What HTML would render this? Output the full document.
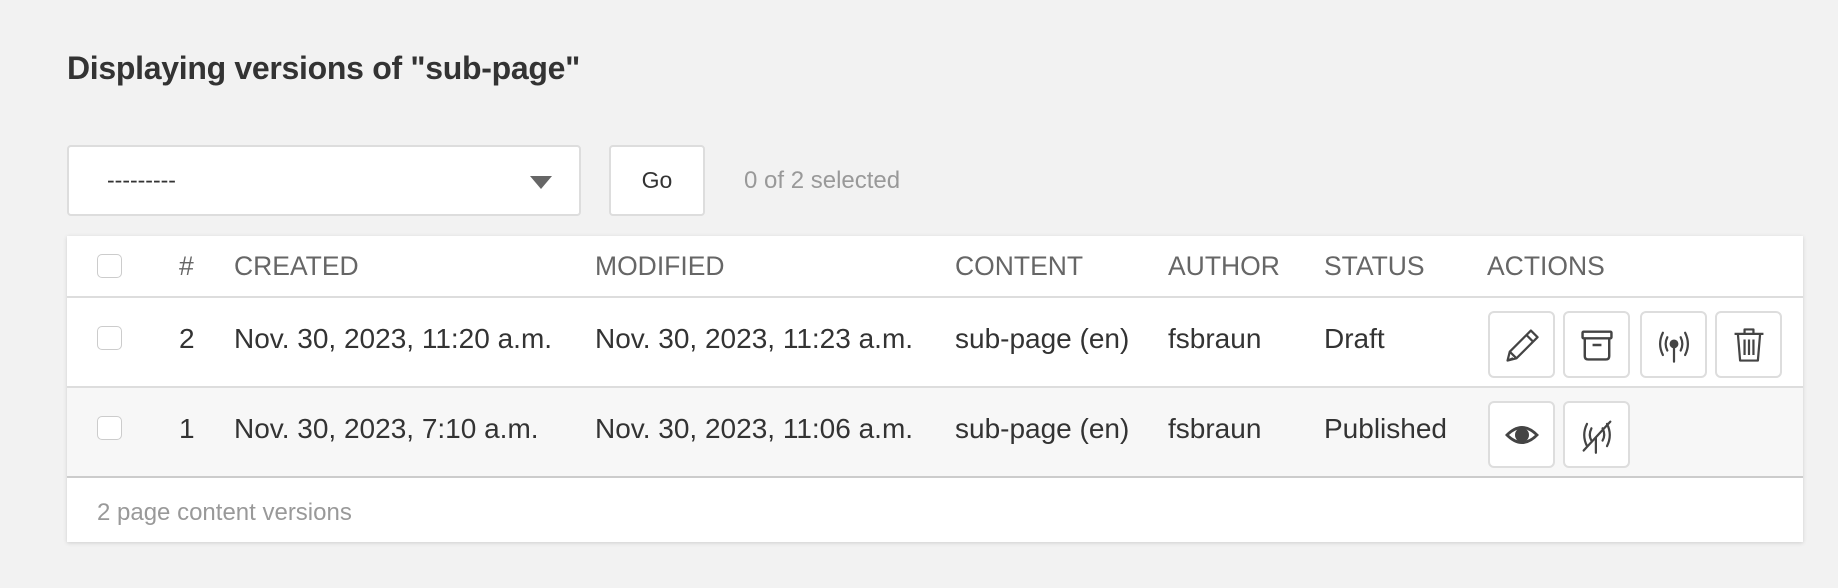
<!DOCTYPE html>
<html><head><meta charset="utf-8"><style>
*{box-sizing:border-box;margin:0;padding:0}
body{width:1838px;height:588px;background:#f2f2f2;font-family:"Liberation Sans",Helvetica,Arial,sans-serif;position:relative;overflow:hidden;color:#333}
.a{position:absolute;white-space:nowrap}
h1{position:absolute;left:67px;top:50px;font-size:32px;font-weight:bold;color:#333;letter-spacing:-0.3px}
.sel{position:absolute;left:67px;top:145px;width:514px;height:71px;background:#fff;border:2px solid #ddd;border-radius:4px}
.go{position:absolute;left:609px;top:145px;width:96px;height:71px;background:#fff;border:2px solid #ddd;border-radius:4px;font-size:23px;text-align:center;line-height:67px;color:#333}
.tbl{position:absolute;left:67px;top:236px;width:1736px;height:306px;background:#fff;box-shadow:0 1px 4px rgba(0,0,0,.15)}
.hl{position:absolute;left:0;width:1736px;height:2px;background:#ddd}
.cb{position:absolute;width:25px;height:24px;border:1.5px solid #ccc;border-radius:5px;background:#fff}
.h{font-size:26.5px;color:#666;top:251px}
.d{font-size:28px;color:#333}
.btn{position:absolute;width:67px;height:67px;border:2px solid #ddd;border-radius:6px;background:#fff;display:flex;align-items:center;justify-content:center}
</style></head><body>
<h1>Displaying versions of "sub-page"</h1>
<div class="sel"><span class="a" style="left:38px;top:20px;font-size:23px;color:#333">---------</span>
<svg class="a" style="left:461px;top:29px" width="22" height="13"><path d="M0 0H22L11 13Z" fill="#666"/></svg></div>
<div class="go">Go</div>
<span class="a" style="left:744px;top:167px;font-size:24px;color:#999">0 of 2 selected</span>
<div class="tbl">
<div class="a" style="left:0;top:151px;width:1736px;height:90px;background:#f7f7f7"></div>
<div class="hl" style="top:60px"></div>
<div class="hl" style="top:150px"></div>
<div class="hl" style="top:240px;background:#ccc"></div>
</div>
<div class="cb" style="left:97px;top:254px"></div>
<div class="cb" style="left:97px;top:326px"></div>
<div class="cb" style="left:97px;top:416px"></div>
<span class="a h" style="left:179px">#</span>
<span class="a h" style="left:234px">CREATED</span>
<span class="a h" style="left:595px">MODIFIED</span>
<span class="a h" style="left:955px">CONTENT</span>
<span class="a h" style="left:1168px">AUTHOR</span>
<span class="a h" style="left:1324px">STATUS</span>
<span class="a h" style="left:1487px">ACTIONS</span>
<span class="a d" style="left:179px;top:323px">2</span>
<span class="a d" style="left:234px;top:323px">Nov. 30, 2023, 11:20 a.m.</span>
<span class="a d" style="left:595px;top:323px">Nov. 30, 2023, 11:23 a.m.</span>
<span class="a d" style="left:955px;top:323px">sub-page (en)</span>
<span class="a d" style="left:1168px;top:323px">fsbraun</span>
<span class="a d" style="left:1324px;top:323px">Draft</span>
<span class="a d" style="left:179px;top:413px">1</span>
<span class="a d" style="left:234px;top:413px">Nov. 30, 2023, 7:10 a.m.</span>
<span class="a d" style="left:595px;top:413px">Nov. 30, 2023, 11:06 a.m.</span>
<span class="a d" style="left:955px;top:413px">sub-page (en)</span>
<span class="a d" style="left:1168px;top:413px">fsbraun</span>
<span class="a d" style="left:1324px;top:413px">Published</span>
<span class="a" style="left:97px;top:499px;font-size:24px;color:#999">2 page content versions</span>

<div class="btn" style="left:1488px;top:311px"><svg width="40" height="40" viewBox="0 0 36 36" fill="none" stroke="#444" stroke-width="2" stroke-linejoin="round"><path d="M5 32L7 24L26 5L32 11L13 30Z M7 24L13 30 M22 9L28 15 M5 32L10 30"/></svg></div>
<div class="btn" style="left:1563px;top:311px"><svg width="40" height="40" viewBox="0 0 36 36" fill="none" stroke="#444" stroke-width="2.2" stroke-linejoin="round"><rect x="5" y="6" width="26" height="6" rx="1"/><path d="M7 12V28Q7 31 10 31H26Q29 31 29 28V12 M14 18H22"/></svg></div>
<div class="btn" style="left:1640px;top:311px"><svg width="40" height="40" viewBox="0 0 36 36" fill="none" stroke="#444" stroke-width="2" stroke-linecap="round"><circle cx="18" cy="17" r="3" fill="#444"/><path d="M18 19V33 M12 11Q9 17 12 23 M24 11Q27 17 24 23 M8 7Q3 17 8 27 M28 7Q33 17 28 27"/></svg></div>
<div class="btn" style="left:1715px;top:311px"><svg width="40" height="40" viewBox="0 0 36 36" fill="none" stroke="#444" stroke-width="2" stroke-linejoin="round"><path d="M5 8H31 M14 8V4H22V8 M8 8L10 32H26L28 8 M14 13V27 M18 13V27 M22 13V27"/></svg></div>
<div class="btn" style="left:1488px;top:401px"><svg width="40" height="36" viewBox="0 0 38 36"><path d="M2 18Q19 0 36 18Q19 36 2 18Z" fill="#444"/><path d="M6 18Q19 6 32 18Q19 30 6 18Z" fill="#fff"/><circle cx="19" cy="18" r="7" fill="#444"/></svg></div>
<div class="btn" style="left:1563px;top:401px"><svg width="40" height="40" viewBox="0 0 36 36" fill="none" stroke="#444" stroke-width="2" stroke-linecap="round"><path d="M17 20V34 M13 12Q10 18 13 23 M23 12Q26 18 23 23 M9 8Q4 18 9 28 M27 8Q32 18 27 28 M6 32L30 6"/></svg></div>
</body></html>
